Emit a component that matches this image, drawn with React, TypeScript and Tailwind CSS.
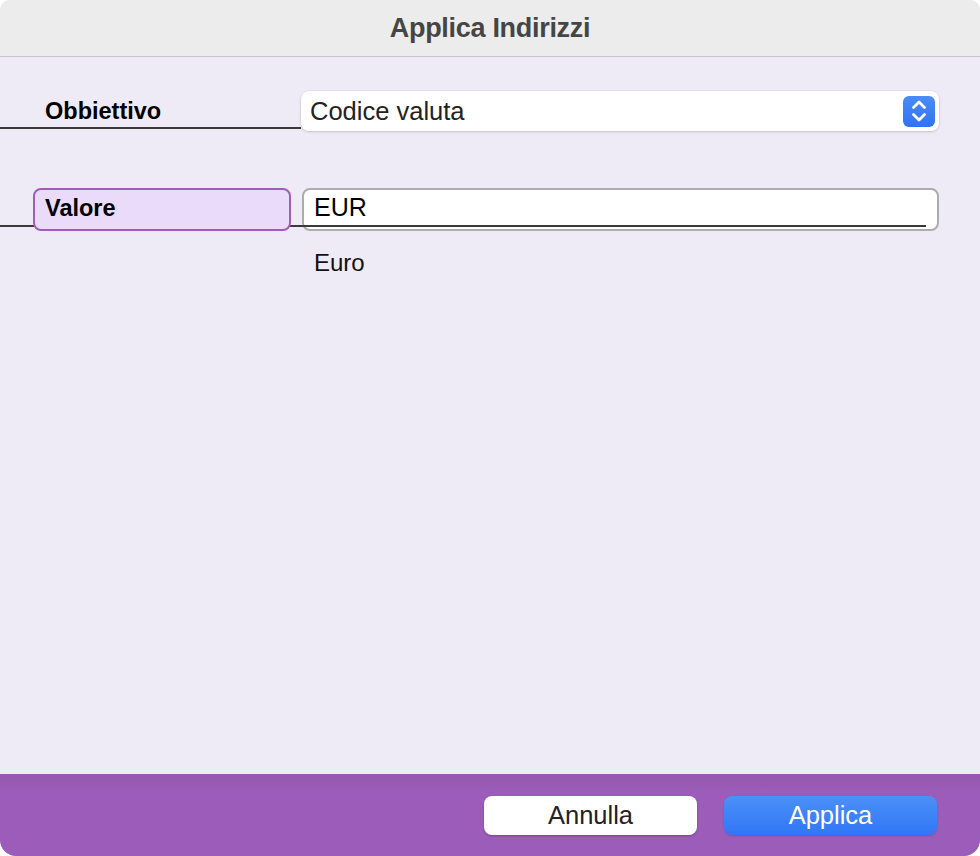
export default function App() {
  return (
    <div className="w-[980px] h-[856px] bg-white" style={{ fontFamily: '"Liberation Sans", Arial, sans-serif' }}>
      <div className="h-full flex flex-col rounded-t-[10px] rounded-b-[16px] overflow-hidden bg-[#efebf6]">
        <header className="h-[57px] shrink-0 bg-[#ececec] border-b border-[#c9c5d3] flex items-center justify-center">
          <span className="text-[27px] font-bold text-[#454545] tracking-[-0.3px]">Applica Indirizzi</span>
        </header>

        <main className="flex-1 pt-[34px]">
          {/* Obbiettivo */}
          <div className="flex items-start">
            <div className="w-[301px] h-[38px] border-b-2 border-[#3a3a3a] pl-[45px] flex items-center pt-[5px]">
              <span className="text-[23.5px] font-bold text-black">Obbiettivo</span>
            </div>
            <div className="w-[638px] h-[40px] bg-white rounded-[8px] shadow-[0_1px_3px_rgba(0,0,0,0.15),0_0_0_0.5px_rgba(0,0,0,0.06)] flex items-center justify-between pl-[9px] pr-[4px]">
              <span className="text-[25.5px] text-[#222]">Codice valuta</span>
              <div className="w-[32px] h-[31px] rounded-[6px] bg-gradient-to-b from-[#4a8cf8] to-[#2f73f4] flex items-center justify-center">
                <svg width="18" height="26" viewBox="0 0 18 26" fill="none" stroke="white" strokeWidth="2.8" strokeLinecap="round" strokeLinejoin="round">
                  <path d="M3.5 9.5 L9 4 L14.5 9.5" />
                  <path d="M3.5 16.5 L9 22 L14.5 16.5" />
                </svg>
              </div>
            </div>
          </div>

          {/* Valore */}
          <div className="flex items-start mt-[57px]">
            <div className="w-[302px] h-[39px] border-b-2 border-[#3a3a3a] pl-[33px]">
              <div className="w-[258px] h-[43px] rounded-[8px] border-2 border-[#a05cbc] bg-[#e9dbf9] pl-[10px] pb-[2px] flex items-center">
                <span className="text-[23.5px] font-bold text-black">Valore</span>
              </div>
            </div>
            <div className="w-[637px]">
              <div className="h-[43px] bg-white rounded-[8px] border-2 border-[#acacac]">
                <div className="h-[37px] mr-[11px] -ml-[2px] border-b-2 border-[#3a3a3a] pl-[12px] flex items-center">
                  <span className="text-[25px] text-black">EUR</span>
                </div>
              </div>
              <div className="pl-[12px] pt-[14px] text-[24px] text-[#111]">Euro</div>
            </div>
          </div>
        </main>

        <footer className="h-[82px] shrink-0 bg-gradient-to-b from-[#9356ad] via-[#9c5cb9] via-[20%] to-[#9c5cb9] flex items-center justify-end pr-[43px] gap-[27px]">
          <button className="w-[213px] h-[39px] mt-[1px] rounded-[8px] bg-white text-[25.5px] text-[#222] shadow-[0_1px_2px_rgba(0,0,0,0.25)]">
            Annulla
          </button>
          <button className="w-[213px] h-[39px] mt-[1px] rounded-[8px] bg-gradient-to-b from-[#4c90f9] to-[#3176f5] text-[25.5px] text-white shadow-[0_1px_2px_rgba(0,0,0,0.15)]">
            Applica
          </button>
        </footer>
      </div>
    </div>
  )
}
